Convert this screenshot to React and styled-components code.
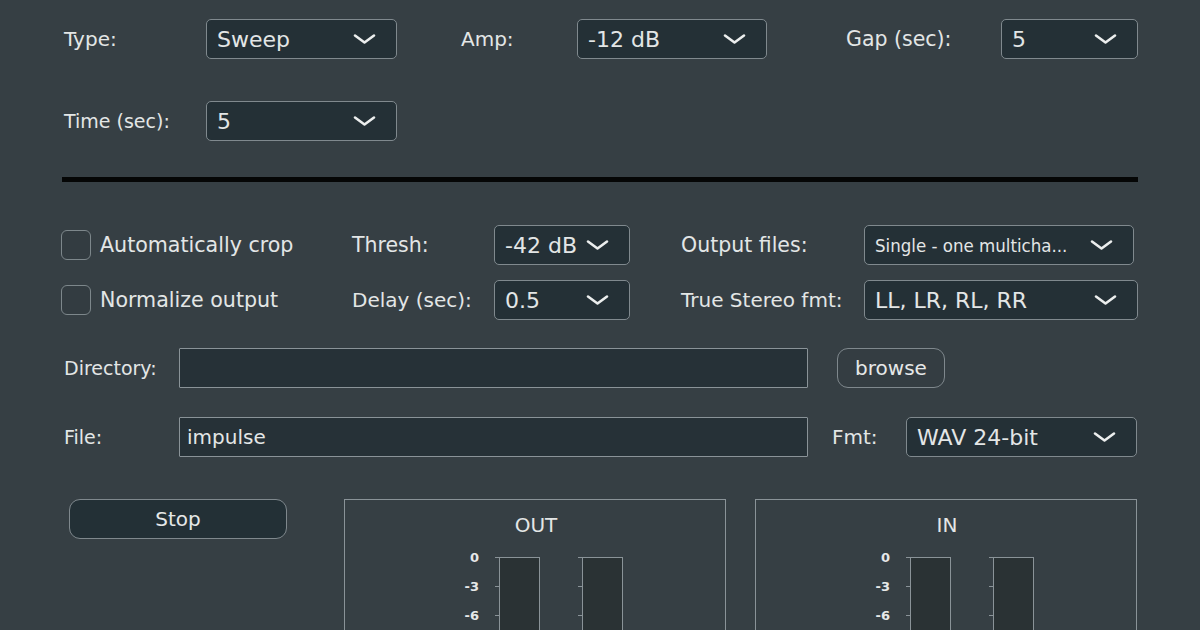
import styled, { createGlobalStyle } from "styled-components";

const GlobalStyle = createGlobalStyle`
  html, body {
    margin: 0;
    padding: 0;
    background: #363f44;
  }
  body {
    font-family: "DejaVu Sans", "Liberation Sans", sans-serif;
    color: #e3e6e6;
  }
`;

const Page = styled.div`
  width: 1200px;
  height: 630px;
  overflow: hidden;
  box-sizing: border-box;
  padding: 19px 62px 0 62px;
  background: #363f44;
`;

const Row = styled.div`
  display: flex;
  align-items: center;
  height: 40px;
  margin-top: ${(p) => p.$mt || 0}px;
`;

const Label = styled.div`
  width: ${(p) => p.$w}px;
  margin-left: ${(p) => p.$ml || 0}px;
  padding-left: ${(p) => p.$pl ?? 2}px;
  box-sizing: border-box;
  font-size: ${(p) => p.$size || 19}px;
  white-space: nowrap;
  flex-shrink: 0;
`;

const SelectBox = styled.div`
  width: ${(p) => p.$w}px;
  height: 40px;
  box-sizing: border-box;
  flex-shrink: 0;
  display: flex;
  align-items: center;
  justify-content: space-between;
  padding: 0 20px 0 10px;
  background: #243036;
  border: 1.5px solid #80898e;
  border-radius: 5px;
`;

const SelectValue = styled.span`
  font-size: ${(p) => p.$size || 22}px;
  font-family: ${(p) =>
    p.$condensed
      ? '"DejaVu Sans Condensed", "DejaVu Sans", sans-serif'
      : '"DejaVu Sans", sans-serif'};
  white-space: nowrap;
  overflow: hidden;
`;

const Divider = styled.div`
  height: 5px;
  background: #050606;
  margin-top: 36px;
`;

const CheckGroup = styled.label`
  width: 290px;
  display: flex;
  align-items: center;
  gap: 9px;
  flex-shrink: 0;
  font-size: 20.6px;
`;

const CheckBox = styled.span`
  width: 30px;
  height: 30px;
  margin-left: -1px;
  box-sizing: border-box;
  border: 1.5px solid #7d878b;
  border-radius: 6px;
  background: #333c41;
`;

const TextInput = styled.div`
  width: ${(p) => p.$w}px;
  height: 40px;
  box-sizing: border-box;
  flex-shrink: 0;
  display: flex;
  align-items: center;
  padding-left: 7px;
  font-size: 20px;
  background: #263137;
  border: 1.5px solid #8a9398;
  border-radius: 1px;
`;

const Button = styled.button`
  width: ${(p) => p.$w}px;
  height: 40px;
  margin-left: ${(p) => p.$ml || 0}px;
  flex-shrink: 0;
  font-family: "DejaVu Sans", sans-serif;
  font-size: 20px;
  color: #e6e8e8;
  background: ${(p) => (p.$dark ? "#233036" : "#343d42")};
  border: 1.5px solid #7f888d;
  border-radius: 11px;
  padding: 0;
`;

const Bottom = styled.div`
  display: flex;
  align-items: flex-start;
  margin-top: 42px;
`;

const Panels = styled.div`
  display: flex;
  gap: 29px;
  margin-left: 57px;
`;

const Panel = styled.div`
  width: 382px;
  height: 200px;
  box-sizing: border-box;
  border: 1.5px solid #8a9398;
  padding-top: 14px;
`;

const PanelTitle = styled.div`
  font-size: 20px;
  text-align: center;
  line-height: 22px;
  padding-left: 2px;
`;

const Meter = styled.div`
  display: flex;
  margin-top: 21px;
  padding-left: 104px;
`;

const ScaleColumn = styled.div`
  display: flex;
  flex-direction: column;
  margin-top: -14px;
  margin-left: ${(p) => p.$ml || 0}px;
`;

const ScaleRow = styled.div`
  height: 29px;
  display: flex;
  align-items: center;
  justify-content: flex-end;
`;

const ScaleText = styled.span`
  width: 30px;
  text-align: right;
  margin-right: 16px;
  font-size: 13px;
  line-height: 14px;
  font-weight: bold;
  color: #e6e8e8;
`;

const Tick = styled.span`
  width: 4px;
  height: 1.5px;
  background: #8a9398;
`;

const Bar = styled.div`
  width: 41px;
  height: 120px;
  box-sizing: border-box;
  background: #2a3234;
  border: 1.5px solid #8a9398;
  border-bottom: none;
`;

const Chevron = () => (
  <svg width="23" height="12" viewBox="0 0 23 12">
    <polyline
      points="2,2.5 11.5,9.5 21,2.5"
      fill="none"
      stroke="#eceeee"
      strokeWidth="2.6"
      strokeLinecap="round"
      strokeLinejoin="round"
    />
  </svg>
);

const Select = ({ w, value, size, condensed }) => (
  <SelectBox $w={w}>
    <SelectValue $size={size} $condensed={condensed}>
      {value}
    </SelectValue>
    <Chevron />
  </SelectBox>
);

const scale = ["0", "-3", "-6"];

const MeterPanel = ({ title }) => (
  <Panel>
    <PanelTitle>{title}</PanelTitle>
    <Meter>
      <ScaleColumn>
        {scale.map((s) => (
          <ScaleRow key={s}>
            <ScaleText>{s}</ScaleText>
            <Tick />
          </ScaleRow>
        ))}
      </ScaleColumn>
      <Bar />
      <ScaleColumn $ml={38}>
        {scale.map((s) => (
          <ScaleRow key={s}>
            <Tick />
          </ScaleRow>
        ))}
      </ScaleColumn>
      <Bar />
    </Meter>
  </Panel>
);

const App = () => {
  return (
    <Page>
      <GlobalStyle />
      <Row>
        <Label $w={144} $size={20}>Type:</Label>
        <Select w={191} value="Sweep" />
        <Label $w={118} $ml={62} $size={20}>Amp:</Label>
        <Select w={190} value="-12 dB" />
        <Label $w={157} $ml={77} $size={20.5}>Gap (sec):</Label>
        <Select w={137} value="5" />
      </Row>
      <Row $mt={42}>
        <Label $w={144}>Time (sec):</Label>
        <Select w={191} value="5" />
      </Row>

      <Divider />

      <Row $mt={43}>
        <CheckGroup>
          <CheckBox />
          Automatically crop
        </CheckGroup>
        <Label $w={142} $pl={0} $size={20.5}>Thresh:</Label>
        <Select w={136} value="-42 dB" />
        <Label $w={183} $ml={51} $pl={0} $size={20.5}>Output files:</Label>
        <Select w={270} value="Single - one multicha..." size={18.5} condensed />
      </Row>
      <Row $mt={15}>
        <CheckGroup>
          <CheckBox />
          Normalize output
        </CheckGroup>
        <Label $w={142} $pl={0} $size={20}>Delay (sec):</Label>
        <Select w={136} value="0.5" />
        <Label $w={183} $ml={51} $pl={0} $size={20}>True Stereo fmt:</Label>
        <Select w={274} value="LL, LR, RL, RR" />
      </Row>

      <Row $mt={28}>
        <Label $w={117}>Directory:</Label>
        <TextInput $w={629} />
        <Button $w={108} $ml={29}>browse</Button>
      </Row>
      <Row $mt={29}>
        <Label $w={117}>File:</Label>
        <TextInput $w={629}>impulse</TextInput>
        <Label $w={74} $ml={24} $pl={0} $size={20}>Fmt:</Label>
        <Select w={231} value="WAV 24-bit" />
      </Row>

      <Bottom>
        <Button $w={218} $ml={7} $dark>Stop</Button>
        <Panels>
          <MeterPanel title="OUT" />
          <MeterPanel title="IN" />
        </Panels>
      </Bottom>
    </Page>
  );
};

export default App;
